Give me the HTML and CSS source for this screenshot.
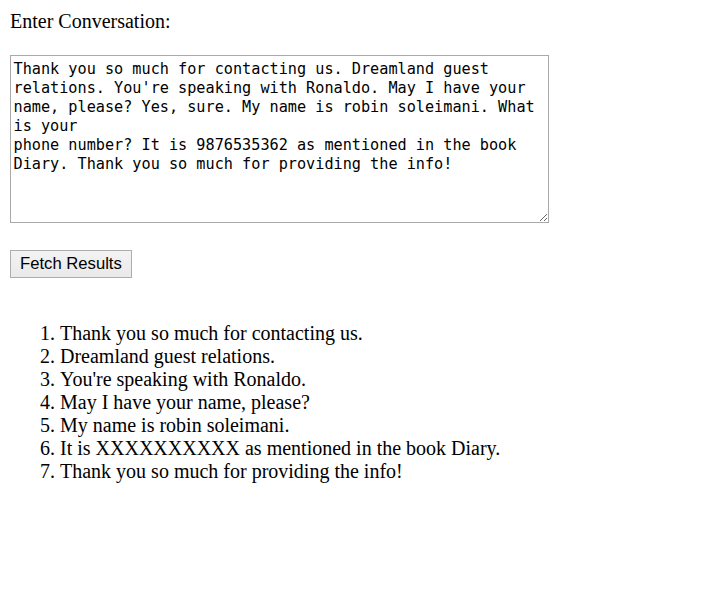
FILE: index.html
```html
<!DOCTYPE html>
<html lang="en">
<head>
<meta charset="utf-8">
<title>Conversation</title>
<link rel="stylesheet" href="styles.css">
</head>
<body>
<main class="page">
  <label class="label" for="conv">Enter Conversation:</label>
  <textarea id="conv" class="conv" spellcheck="true">Thank you so much for contacting us. Dreamland guest relations. You're speaking with Ronaldo. May I have your name, please? Yes, sure. My name is robin soleimani. What is your
phone number? It is 9876535362 as mentioned in the book Diary. Thank you so much for providing the info!</textarea>
  <button class="fetch" type="button">Fetch Results</button>
  <ol class="results">
    <li>Thank you so much for contacting us.</li>
    <li>Dreamland guest relations.</li>
    <li>You're speaking with Ronaldo.</li>
    <li>May I have your name, please?</li>
    <li>My name is robin soleimani.</li>
    <li>It is XXXXXXXXXX as mentioned in the book Diary.</li>
    <li>Thank you so much for providing the info!</li>
  </ol>
</main>
</body>
</html>
```
FILE: styles.css
```css
html, body {
  background: #ffffff;
}
body {
  margin: 10px;
  font-family: "Liberation Serif", "Times New Roman", serif;
  font-size: 20px;
  line-height: 23px;
  color: #000000;
}
.page {
  display: flex;
  flex-direction: column;
  align-items: flex-start;
}
.label {
  display: block;
  height: 23px;
}
.conv {
  box-sizing: border-box;
  margin: 22px 0 0 0;
  width: 539px;
  height: 168px;
  padding: 4px 2.5px 2px 2.5px;
  border: 1px solid #a9a9a9;
  font-family: "DejaVu Sans Mono", "Liberation Mono", monospace;
  font-size: 15.2px;
  line-height: 19px;
  color: #000000;
  background: #ffffff;
  resize: both;
}
.fetch {
  box-sizing: border-box;
  margin: 27px 0 0 0;
  height: 28px;
  padding: 0 9px;
  border: 1px solid #adadad;
  border-radius: 0;
  background: linear-gradient(#f3f3f3, #e9e9e9);
  font-family: "Liberation Sans", Arial, sans-serif;
  font-size: 16.67px;
  line-height: 20px;
  color: #000000;
}
.results {
  margin: 44px 0 0 0;
  padding: 0 0 0 50px;
}
```
